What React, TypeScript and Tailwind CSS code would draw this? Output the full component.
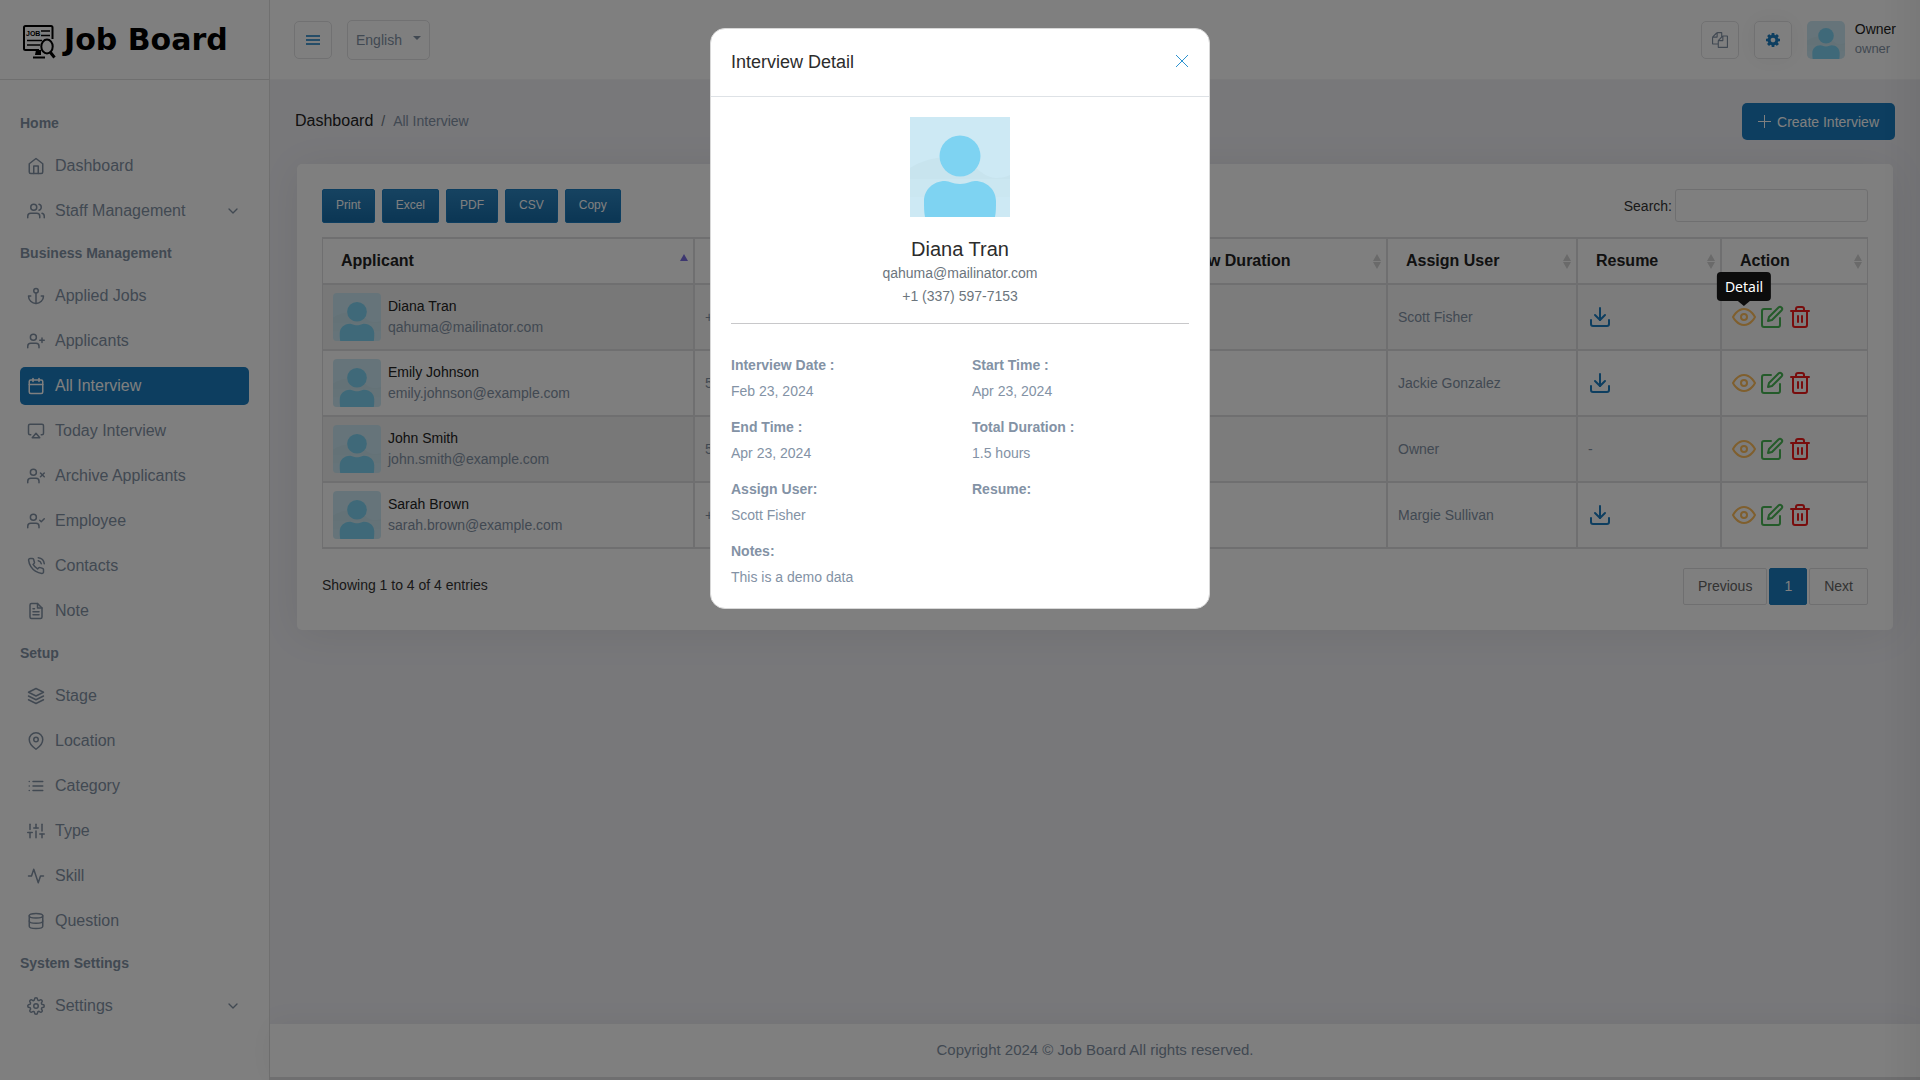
import type { ComponentType, ReactNode } from "react";
import {
  FiActivity,
  FiAirplay,
  FiAnchor,
  FiCalendar,
  FiChevronDown,
  FiDatabase,
  FiDownload,
  FiEdit,
  FiEye,
  FiFileText,
  FiHome,
  FiLayers,
  FiList,
  FiMapPin,
  FiPhoneCall,
  FiSettings,
  FiSliders,
  FiTrash2,
  FiUserCheck,
  FiUserPlus,
  FiUsers,
  FiUserX,
} from "react-icons/fi";

type IconType = ComponentType<{ size?: number; className?: string }>;
type NavItem = { label: string; icon: IconType; active?: boolean; more?: boolean };
type NavGroup = { title: string; items: NavItem[] };

const navigation: NavGroup[] = [
  {
    title: "Home",
    items: [
      { label: "Dashboard", icon: FiHome },
      { label: "Staff Management", icon: FiUsers, more: true },
    ],
  },
  {
    title: "Business Management",
    items: [
      { label: "Applied Jobs", icon: FiAnchor },
      { label: "Applicants", icon: FiUserPlus },
      { label: "All Interview", icon: FiCalendar, active: true },
      { label: "Today Interview", icon: FiAirplay },
      { label: "Archive Applicants", icon: FiUserX },
      { label: "Employee", icon: FiUserCheck },
      { label: "Contacts", icon: FiPhoneCall },
      { label: "Note", icon: FiFileText },
    ],
  },
  {
    title: "Setup",
    items: [
      { label: "Stage", icon: FiLayers },
      { label: "Location", icon: FiMapPin },
      { label: "Category", icon: FiList },
      { label: "Type", icon: FiSliders },
      { label: "Skill", icon: FiActivity },
      { label: "Question", icon: FiDatabase },
    ],
  },
  { title: "System Settings", items: [{ label: "Settings", icon: FiSettings, more: true }] },
];

const interviews = [
  { name: "Diana Tran", email: "qahuma@mailinator.com", phone: "+1 (337) 597-7153", user: "Scott Fisher", resume: true },
  { name: "Emily Johnson", email: "emily.johnson@example.com", phone: "555-1234", user: "Jackie Gonzalez", resume: true },
  { name: "John Smith", email: "john.smith@example.com", phone: "555-5678", user: "Owner", resume: false },
  { name: "Sarah Brown", email: "sarah.brown@example.com", phone: "+1 555-9012", user: "Margie Sullivan", resume: true },
];

const details = [
  ["Interview Date :", "Feb 23, 2024"],
  ["Start Time :", "Apr 23, 2024"],
  ["End Time :", "Apr 23, 2024"],
  ["Total Duration :", "1.5 hours"],
  ["Assign User:", "Scott Fisher"],
  ["Resume:", ""],
  ["Notes:", "This is a demo data"],
];

function Avatar({ className }: { className: string }) {
  return (
    <svg viewBox="0 0 100 100" className={className} role="img" aria-label="Avatar">
      <rect width="100" height="100" fill="#cde9f4" />
      <path d="M0 51C14 42 34 38 48 41C64 44 70 60 86 61C92 61 96 60 100 58V80H0Z" fill="#c8e4ee" />
      <rect y="62" width="100" height="38" fill="#cde9f4" opacity="0.6" />
      <ellipse cx="50" cy="39" rx="20.500" ry="20.500" fill="#7ed3f2" />
      <path
        d="M15 100C14 95 14 90 14 84C14 73 23 64 35 64C40 64 42 67 50 67C58 67 60 64 65 64C77 64 86 73 86 84C86 90 86 95 85 100Z"
        fill="#7ed3f2"
      />
    </svg>
  );
}

function LogoMark() {
  return (
    <svg viewBox="0 0 34 36" className="mt-1 h-9 w-[34px] shrink-0" fill="none" stroke="#000" strokeWidth="2" aria-hidden="true">
      <path d="M17 26H3.500C2.500 26 2 25.500 2 24.500V3.500C2 2.500 2.500 2 3.500 2H29C30 2 30.500 2.500 30.500 3.500V15" />
      <text x="4" y="12" fontSize="7" fontWeight="700" fill="#000" stroke="none" className="font-['Liberation_Sans']">
        JOB
      </text>
      <path d="M19 7H28M19 11.500H28M5 16.500H20M5 21H18" strokeWidth="1.600" />
      <ellipse cx="25" cy="22.500" rx="5.700" ry="7" />
      <path d="M28.500 28.500L32.500 33.500" strokeWidth="3" />
      <path d="M14 26H19V31H13Z" fill="#000" stroke="none" />
      <path d="M11 33.500H23" />
    </svg>
  );
}

function FilesIcon() {
  return (
    <svg viewBox="0 0 1792 1792" className="size-4" fill="currentColor" aria-hidden="true">
      <path d="M1696 384q40 0 68 28t28 68v1216q0 40-28 68t-68 28h-960q-40 0-68-28t-28-68v-288h-544q-40 0-68-28t-28-68v-672q0-40 20-88t48-76l408-408q28-28 76-48t88-20h416q40 0 68 28t28 68v328q68-40 128-40h416zm-544 213l-299 299h299v-299zm-640-384l-299 299h299v-299zm196 647l316-316v-416h-384v416q0 40-28 68t-68 28h-416v640h512v-256q0-40 20-88t48-76zm956 804v-1152h-384v416q0 40-28 68t-68 28h-416v640h896z" />
    </svg>
  );
}

function CogIcon() {
  return (
    <svg viewBox="128 128 1536 1536" className="size-3.5" fill="currentColor" aria-hidden="true">
      <path d="M1152 896q0-106-75-181t-181-75-181 75-75 181 75 181 181 75 181-75 75-181zm512-109v222q0 12-8 23t-20 13l-185 28q-19 54-39 91 35 50 107 138 10 12 10 25t-9 23q-27 37-99 108t-94 71q-12 0-26-9l-138-108q-44 23-91 38-16 136-29 186-7 28-36 28h-222q-14 0-24.500-8.500t-11.500-21.500l-28-184q-49-16-90-37l-141 107q-10 9-25 9-14 0-25-11-126-114-165-168-7-10-7-23 0-12 8-23 15-21 51-66.500t54-70.500q-27-50-41-99l-183-27q-13-2-21-12.500t-8-23.500v-222q0-12 8-23t19-13l186-28q14-46 39-92-40-57-107-138-10-12-10-24 0-10 9-23 26-36 98.500-107.500t94.500-71.500q13 0 26 10l138 107q44-23 91-38 16-136 29-186 7-28 36-28h222q14 0 24.500 8.500t11.500 21.500l28 184q49 16 90 37l142-107q9-9 24-9 13 0 25 10 129 119 165 170 7 8 7 22 0 12-8 23-15 21-51 66.500t-54 70.500q26 50 41 98l183 28q13 2 21 12.500t8 23.500z" />
    </svg>
  );
}

function Sidebar() {
  return (
    <aside className="w-[270px] shrink-0 border-r border-[#e0e0e0] bg-white">
      <a href="#" className="flex h-20 items-center gap-2 border-b border-[#dedede] px-[22px] text-[30px] font-black text-black">
        <LogoMark />
        <span className="font-['DejaVu_Sans'] whitespace-nowrap">Job Board</span>
      </a>
      <nav className="px-5 pt-[27px] text-[#8392a5]">
        {navigation.map((group) => (
          <section key={group.title}>
            <h2 className="h-10 pt-1 text-sm leading-6 font-bold">{group.title}</h2>
            <ul>
              {group.items.map(({ label, icon: Icon, active, more }) => (
                <li key={label} className="mb-[7px]">
                  <a
                    href="#"
                    className={
                      active
                        ? "flex h-[38px] items-center gap-2.5 rounded-[5px] bg-[#1a7cc0] pr-2 pl-[7px] text-white"
                        : "flex h-[38px] items-center gap-2.5 rounded-[5px] pr-2 pl-[7px]"
                    }
                  >
                    <Icon size={18} />
                    <span className="grow">{label}</span>
                    {more && <FiChevronDown size={16} />}
                  </a>
                </li>
              ))}
            </ul>
          </section>
        ))}
      </nav>
    </aside>
  );
}

function Header() {
  return (
    <header className="flex h-20 items-center justify-between border-b border-[#f4f4f6] bg-white px-6">
      <div className="flex items-center gap-[15px]">
        <button
          type="button"
          aria-label="Toggle menu"
          className="flex size-[38px] flex-col items-center justify-center gap-0.5 rounded-[5px] border border-[#e2e2e4]"
        >
          <span className="h-0.5 w-3.5 bg-[#4a9ad0]" />
          <span className="h-0.5 w-3.5 bg-[#4a9ad0]" />
          <span className="h-0.5 w-3.5 bg-[#4a9ad0]" />
        </button>
        <div className="relative">
          <select
            aria-label="Language"
            className="h-10 w-[83px] appearance-none rounded-[5px] border border-[#e2e2e4] bg-white pl-2 text-sm text-[#8392a5]"
          >
            <option>English</option>
          </select>
          <span className="pointer-events-none absolute top-4 right-[9px] border-x-4 border-t-4 border-x-transparent border-t-[#8392a5]" />
        </div>
      </div>
      <div className="flex items-center gap-[15px]">
        <button
          type="button"
          aria-label="Copy"
          className="flex size-[38px] items-center justify-center rounded-[5px] border border-[#e2e2e4] text-[#8392a5]"
        >
          <FilesIcon />
        </button>
        <button
          type="button"
          aria-label="Theme settings"
          className="flex size-[38px] items-center justify-center rounded-[5px] border border-[#e2e2e4] text-[#1a7cc0] shadow-[0_0_24px_rgba(0,0,0,0.06)]"
        >
          <CogIcon />
        </button>
        <div className="flex items-center gap-2.5">
          <Avatar className="size-[38px] rounded-[5px]" />
          <div className="pb-0.5 leading-5">
            <p className="text-sm leading-5 text-[#222]">Owner</p>
            <p className="text-[13px] leading-5 text-[#8392a5]">owner</p>
          </div>
        </div>
      </div>
    </header>
  );
}

function SortArrows({ ascending }: { ascending?: boolean }) {
  if (ascending) {
    return <span className="mb-2 border-x-4 border-b-[7px] border-x-transparent border-b-[#7b6fe0]" />;
  }
  return (
    <span className="flex flex-col gap-px">
      <span className="border-x-4 border-b-[7px] border-x-transparent border-b-[#d4d4d4]" />
      <span className="border-x-4 border-t-[7px] border-x-transparent border-t-[#d4d4d4]" />
    </span>
  );
}

function HeadCell({ children, ascending }: { children: ReactNode; ascending?: boolean }) {
  return (
    <th scope="col" className="h-[46px] border border-[#dfdfe1] pr-[5px] pl-[18px] text-left text-base font-bold text-[#222]">
      <div className="flex items-center justify-between">
        <span className="whitespace-nowrap">{children}</span>
        <SortArrows ascending={ascending} />
      </div>
    </th>
  );
}

function RowActions({ tooltip }: { tooltip?: boolean }) {
  return (
    <div className="flex gap-1">
      <button type="button" aria-label="Detail" className="relative text-[#ffbe5c]">
        <FiEye size={24} />
        {tooltip && (
          <span
            role="tooltip"
            className="absolute bottom-7 left-1/2 z-50 flex h-[29px] -translate-x-1/2 items-center rounded bg-[#0c0c0c] px-2 font-['Noto_Sans'] text-sm text-white after:absolute after:top-full after:left-1/2 after:-translate-x-1/2 after:border-x-[6px] after:border-t-[5px] after:border-x-transparent after:border-t-[#0c0c0c]"
          >
            Detail
          </span>
        )}
      </button>
      <button type="button" aria-label="Edit" className="text-[#48b654]">
        <FiEdit size={24} />
      </button>
      <button type="button" aria-label="Delete" className="text-[#f01b1b]">
        <FiTrash2 size={24} />
      </button>
    </div>
  );
}

function InterviewTable() {
  const cell = "h-[66px] border border-[#dfdfe1] px-2.5";
  return (
    <table className="mt-3.5 w-full table-fixed border-separate border-spacing-0 border-y border-[#dfdfe1] text-sm text-[#8392a5]">
      <colgroup>
        <col className="w-[372px]" />
        <col className="w-[438px]" />
        <col />
        <col className="w-[190px]" />
        <col className="w-[144px]" />
        <col className="w-[147px]" />
      </colgroup>
      <thead>
        <tr>
          <HeadCell ascending>Applicant</HeadCell>
          <HeadCell>Phone</HeadCell>
          <HeadCell>Interview Duration</HeadCell>
          <HeadCell>Assign User</HeadCell>
          <HeadCell>Resume</HeadCell>
          <HeadCell>Action</HeadCell>
        </tr>
      </thead>
      <tbody>
        {interviews.map((row, index) => (
          <tr key={row.email} className="group odd:bg-[#f9f9f9]">
            <td className={`${cell} bg-[#fcfcfc] group-odd:bg-[#f0f0f0]`}>
              <div className="flex items-center gap-[7px]">
                <Avatar className="size-12 rounded" />
                <div className="leading-[21px]">
                  <p className="text-[#222]">{row.name}</p>
                  <p>{row.email}</p>
                </div>
              </div>
            </td>
            <td className={cell}>{row.phone}</td>
            <td className={cell}>1.5 hours</td>
            <td className={cell}>{row.user}</td>
            <td className={cell}>
              {row.resume ? (
                <a href="#" aria-label={`Download resume of ${row.name}`} className="inline-block align-middle text-[#1a7cc0]">
                  <FiDownload size={24} />
                </a>
              ) : (
                "-"
              )}
            </td>
            <td className={cell}>
              <RowActions tooltip={index === 0} />
            </td>
          </tr>
        ))}
      </tbody>
    </table>
  );
}

function InterviewCard() {
  return (
    <section className="mx-[27px] mt-6 rounded-[5px] bg-white p-[25px] shadow-[0_4px_40px_rgba(0,0,0,0.07)]">
      <div className="flex items-start justify-between">
        <div className="flex gap-[7px]">
          {["Print", "Excel", "PDF", "CSV", "Copy"].map((label) => (
            <button
              key={label}
              type="button"
              className="h-[34px] rounded-[2px] border border-[#1a7cc0] bg-linear-to-b from-[#2c86c2] to-[#166ca8] px-[13px] pb-0.5 text-xs text-white"
            >
              {label}
            </button>
          ))}
        </div>
        <label className="flex items-center gap-[3px] text-sm text-[#333]">
          Search:
          <input type="search" className="h-[33px] w-[193px] rounded-[3px] border border-[#dfdfe1] bg-transparent px-2" />
        </label>
      </div>
      <InterviewTable />
      <div className="mt-[19px] flex items-center justify-between text-sm">
        <p className="pb-1 text-[#333]">Showing 1 to 4 of 4 entries</p>
        <nav aria-label="Pagination" className="flex gap-0.5 text-[#666]">
          <button type="button" className="h-[37px] rounded-[2px] border border-[#dfdfe1] px-3.5 pb-0.5">
            Previous
          </button>
          <button type="button" aria-current="page" className="h-[37px] rounded-[2px] border border-[#1a7cc0] bg-[#1a7cc0] px-3.5 pb-0.5 text-white">
            1
          </button>
          <button type="button" className="h-[37px] rounded-[2px] border border-[#dfdfe1] px-3.5 pb-0.5">
            Next
          </button>
        </nav>
      </div>
    </section>
  );
}

function DetailDialog() {
  return (
    <div
      role="dialog"
      aria-modal="true"
      aria-labelledby="detail-title"
      className="fixed inset-x-0 top-7 z-[60] mx-auto w-full max-w-[500px] rounded-[15px] border border-[#d8d8d8] bg-white"
    >
      <div className="flex h-[68px] items-center justify-between border-b border-[#dee2e6] px-5 pb-0.5">
        <h1 id="detail-title" className="text-lg text-[#2c2c2c]">
          Interview Detail
        </h1>
        <button type="button" aria-label="Close" className="pb-0.5 text-[#2d93d0]">
          <svg viewBox="0 0 14 14" className="size-3.5" stroke="currentColor" strokeWidth="1" aria-hidden="true">
            <path d="M1 1L13 13M13 1L1 13" />
          </svg>
        </button>
      </div>
      <div className="p-5">
        <div className="flex flex-col items-center border-b border-[#c8c8ca] pb-[15px]">
          <Avatar className="size-[100px]" />
          <h2 className="mt-5 text-xl leading-[25px] text-[#2c2c2c]">Diana Tran</h2>
          <p className="text-sm leading-[23px] text-[#6c757d]">qahuma@mailinator.com</p>
          <p className="text-sm leading-[23px] text-[#6c757d]">+1 (337) 597-7153</p>
        </div>
        <dl className="mt-[31px] grid grid-cols-2 gap-x-6 gap-y-[15px] text-sm leading-[21px] text-[#8392a5]">
          {details.map(([label, value]) => (
            <div key={label}>
              <dt className="mb-[5px] font-bold">{label}</dt>
              <dd>{value}</dd>
            </div>
          ))}
        </dl>
      </div>
    </div>
  );
}

export default function App() {
  return (
    <div className="flex min-h-screen bg-[#f0f0f5] font-['Liberation_Sans',sans-serif]">
      <Sidebar />
      <div className="flex min-w-0 grow flex-col">
        <Header />
        <main className="grow">
          <div className="flex items-center justify-between px-[25px] pt-[23px]">
            <nav aria-label="Breadcrumb" className="pb-0.5">
              <ol className="flex items-baseline gap-2 text-sm text-[#8392a5]">
                <li>
                  <a href="#" className="text-base text-[#222]">
                    Dashboard
                  </a>
                </li>
                <li aria-hidden="true" className="text-[#6c757d]">
                  /
                </li>
                <li>All Interview</li>
              </ol>
            </nav>
            <button type="button" className="flex h-[37px] items-center gap-1.5 rounded-[5px] bg-[#1a7cc0] px-4 text-sm text-white">
              <svg viewBox="0 0 13 13" className="size-[13px]" stroke="currentColor" aria-hidden="true">
                <path d="M6.500 0V13M0 6.500H13" />
              </svg>
              Create Interview
            </button>
          </div>
          <InterviewCard />
        </main>
        <footer className="flex h-14 items-center justify-center border-b-[3px] border-[#dedee0] bg-white text-[15px] text-[#8392a5] shadow-[0_0_30px_rgba(0,0,0,0.05)]">
          Copyright 2024 © Job Board All rights reserved.
        </footer>
      </div>
      <div className="pointer-events-none fixed inset-y-0 right-0 z-30 w-10 bg-linear-to-r from-transparent to-black/5" />
      <div className="fixed inset-0 z-40 bg-black/50" />
      <DetailDialog />
    </div>
  );
}
